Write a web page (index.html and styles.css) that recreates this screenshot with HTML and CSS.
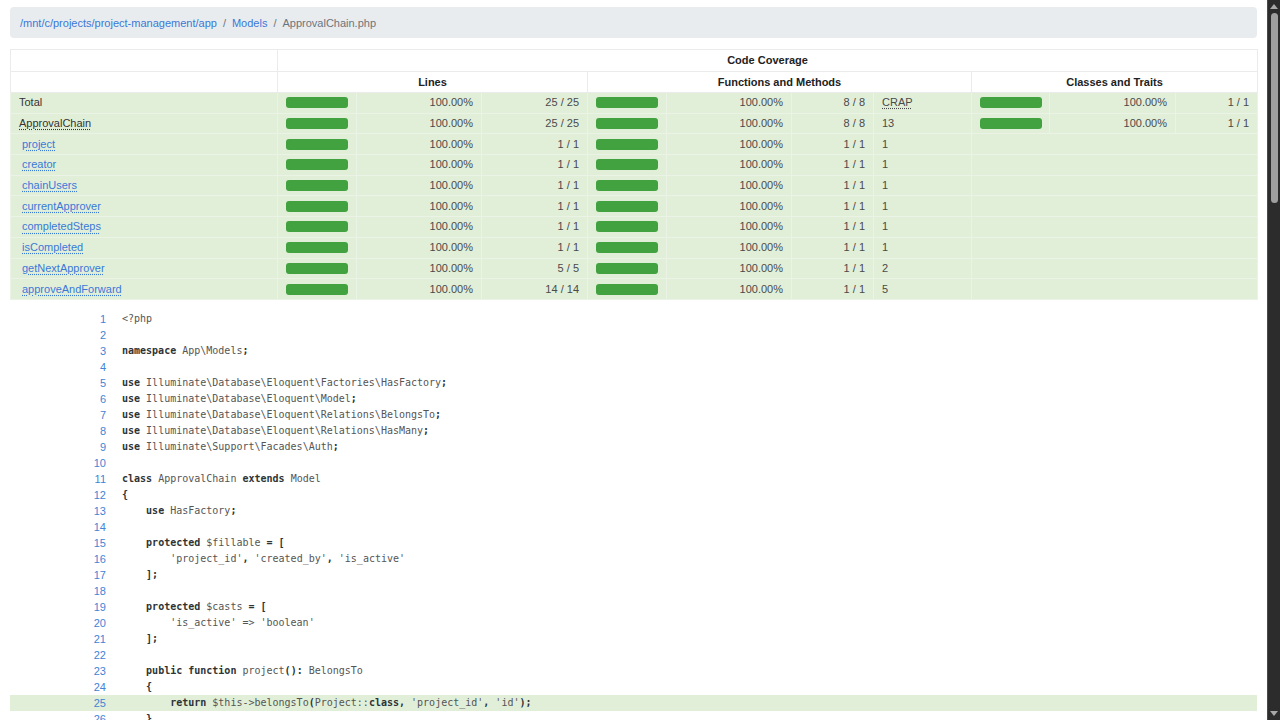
FILE: index.html
```html
<!DOCTYPE html>
<html lang="en">
<head>
<meta charset="utf-8">
<title>Code Coverage for ApprovalChain.php</title>
<link rel="stylesheet" href="styles.css">
</head>
<body>
<div class="page">
  <div class="main">
    <nav class="breadcrumb">
      <a href="#">/mnt/c/projects/project-management/app</a>
      <span class="sep">/</span>
      <a href="#">Models</a>
      <span class="sep">/</span>
      <span class="active">ApprovalChain.php</span>
    </nav>

    <table class="cov">
      <colgroup>
        <col class="c-name"><col class="c-bar"><col class="c-pct"><col class="c-cnt-l">
        <col class="c-bar"><col class="c-pct"><col class="c-cnt"><col class="c-crap">
        <col class="c-bar2"><col class="c-pct2"><col class="c-cnt">
      </colgroup>
      <thead>
        <tr class="h1"><td></td><td colspan="10" class="center"><strong>Code Coverage</strong></td></tr>
        <tr class="h2"><td></td><td colspan="3" class="center"><strong>Lines</strong></td><td colspan="4" class="center"><strong>Functions and Methods</strong></td><td colspan="3" class="center"><strong>Classes and Traits</strong></td></tr>
      </thead>
      <tbody>
        <tr><td class="name">Total</td><td class="bar"><div class="progress"></div></td><td class="num">100.00%</td><td class="num">25 / 25</td><td class="bar"><div class="progress"></div></td><td class="num">100.00%</td><td class="num">8 / 8</td><td class="crap"><abbr>CRAP</abbr></td><td class="bar"><div class="progress"></div></td><td class="num">100.00%</td><td class="num">1 / 1</td></tr>
        <tr><td class="name"><abbr>ApprovalChain</abbr></td><td class="bar"><div class="progress"></div></td><td class="num">100.00%</td><td class="num">25 / 25</td><td class="bar"><div class="progress"></div></td><td class="num">100.00%</td><td class="num">8 / 8</td><td class="crap">13</td><td class="bar"><div class="progress"></div></td><td class="num">100.00%</td><td class="num">1 / 1</td></tr>
        <tr><td class="name method"><a href="#23">project</a></td><td class="bar"><div class="progress"></div></td><td class="num">100.00%</td><td class="num">1 / 1</td><td class="bar"><div class="progress"></div></td><td class="num">100.00%</td><td class="num">1 / 1</td><td class="crap">1</td><td colspan="3"></td></tr>
        <tr><td class="name method"><a href="#28">creator</a></td><td class="bar"><div class="progress"></div></td><td class="num">100.00%</td><td class="num">1 / 1</td><td class="bar"><div class="progress"></div></td><td class="num">100.00%</td><td class="num">1 / 1</td><td class="crap">1</td><td colspan="3"></td></tr>
        <tr><td class="name method"><a href="#33">chainUsers</a></td><td class="bar"><div class="progress"></div></td><td class="num">100.00%</td><td class="num">1 / 1</td><td class="bar"><div class="progress"></div></td><td class="num">100.00%</td><td class="num">1 / 1</td><td class="crap">1</td><td colspan="3"></td></tr>
        <tr><td class="name method"><a href="#38">currentApprover</a></td><td class="bar"><div class="progress"></div></td><td class="num">100.00%</td><td class="num">1 / 1</td><td class="bar"><div class="progress"></div></td><td class="num">100.00%</td><td class="num">1 / 1</td><td class="crap">1</td><td colspan="3"></td></tr>
        <tr><td class="name method"><a href="#43">completedSteps</a></td><td class="bar"><div class="progress"></div></td><td class="num">100.00%</td><td class="num">1 / 1</td><td class="bar"><div class="progress"></div></td><td class="num">100.00%</td><td class="num">1 / 1</td><td class="crap">1</td><td colspan="3"></td></tr>
        <tr><td class="name method"><a href="#48">isCompleted</a></td><td class="bar"><div class="progress"></div></td><td class="num">100.00%</td><td class="num">1 / 1</td><td class="bar"><div class="progress"></div></td><td class="num">100.00%</td><td class="num">1 / 1</td><td class="crap">1</td><td colspan="3"></td></tr>
        <tr><td class="name method"><a href="#53">getNextApprover</a></td><td class="bar"><div class="progress"></div></td><td class="num">100.00%</td><td class="num">5 / 5</td><td class="bar"><div class="progress"></div></td><td class="num">100.00%</td><td class="num">1 / 1</td><td class="crap">2</td><td colspan="3"></td></tr>
        <tr><td class="name method"><a href="#65">approveAndForward</a></td><td class="bar"><div class="progress"></div></td><td class="num">100.00%</td><td class="num">14 / 14</td><td class="bar"><div class="progress"></div></td><td class="num">100.00%</td><td class="num">1 / 1</td><td class="crap">5</td><td colspan="3"></td></tr>
      </tbody>
    </table>

    <table class="code">
      <colgroup><col class="c-ln"><col></colgroup>
      <tbody>
        <tr><td class="ln"><a href="#1">1</a></td><td class="line"><span class="d">&lt;?php</span></td></tr>
        <tr><td class="ln"><a href="#2">2</a></td><td class="line"></td></tr>
        <tr><td class="ln"><a href="#3">3</a></td><td class="line"><span class="k">namespace</span> <span class="d">App\Models</span><span class="k">;</span></td></tr>
        <tr><td class="ln"><a href="#4">4</a></td><td class="line"></td></tr>
        <tr><td class="ln"><a href="#5">5</a></td><td class="line"><span class="k">use</span> <span class="d">Illuminate\Database\Eloquent\Factories\HasFactory</span><span class="k">;</span></td></tr>
        <tr><td class="ln"><a href="#6">6</a></td><td class="line"><span class="k">use</span> <span class="d">Illuminate\Database\Eloquent\Model</span><span class="k">;</span></td></tr>
        <tr><td class="ln"><a href="#7">7</a></td><td class="line"><span class="k">use</span> <span class="d">Illuminate\Database\Eloquent\Relations\BelongsTo</span><span class="k">;</span></td></tr>
        <tr><td class="ln"><a href="#8">8</a></td><td class="line"><span class="k">use</span> <span class="d">Illuminate\Database\Eloquent\Relations\HasMany</span><span class="k">;</span></td></tr>
        <tr><td class="ln"><a href="#9">9</a></td><td class="line"><span class="k">use</span> <span class="d">Illuminate\Support\Facades\Auth</span><span class="k">;</span></td></tr>
        <tr><td class="ln"><a href="#10">10</a></td><td class="line"></td></tr>
        <tr><td class="ln"><a href="#11">11</a></td><td class="line"><span class="k">class</span> <span class="d">ApprovalChain</span> <span class="k">extends</span> <span class="d">Model</span></td></tr>
        <tr><td class="ln"><a href="#12">12</a></td><td class="line"><span class="k">{</span></td></tr>
        <tr><td class="ln"><a href="#13">13</a></td><td class="line">    <span class="k">use</span> <span class="d">HasFactory</span><span class="k">;</span></td></tr>
        <tr><td class="ln"><a href="#14">14</a></td><td class="line"></td></tr>
        <tr><td class="ln"><a href="#15">15</a></td><td class="line">    <span class="k">protected</span> <span class="d">$fillable</span> <span class="k">=</span> <span class="k">[</span></td></tr>
        <tr><td class="ln"><a href="#16">16</a></td><td class="line">        <span class="d">'project_id'</span><span class="k">,</span> <span class="d">'created_by'</span><span class="k">,</span> <span class="d">'is_active'</span></td></tr>
        <tr><td class="ln"><a href="#17">17</a></td><td class="line">    <span class="k">];</span></td></tr>
        <tr><td class="ln"><a href="#18">18</a></td><td class="line"></td></tr>
        <tr><td class="ln"><a href="#19">19</a></td><td class="line">    <span class="k">protected</span> <span class="d">$casts</span> <span class="k">=</span> <span class="k">[</span></td></tr>
        <tr><td class="ln"><a href="#20">20</a></td><td class="line">        <span class="d">'is_active' =&gt; 'boolean'</span></td></tr>
        <tr><td class="ln"><a href="#21">21</a></td><td class="line">    <span class="k">];</span></td></tr>
        <tr><td class="ln"><a href="#22">22</a></td><td class="line"></td></tr>
        <tr><td class="ln"><a href="#23">23</a></td><td class="line">    <span class="k">public</span> <span class="k">function</span> <span class="d">project</span><span class="k">():</span> <span class="d">BelongsTo</span></td></tr>
        <tr><td class="ln"><a href="#24">24</a></td><td class="line">    <span class="k">{</span></td></tr>
        <tr class="covered"><td class="ln"><a href="#25">25</a></td><td class="line">        <span class="k">return</span> <span class="d">$this-&gt;belongsTo</span><span class="k">(</span><span class="d">Project::</span><span class="k">class</span><span class="k">,</span> <span class="d">'project_id'</span><span class="k">,</span> <span class="d">'id'</span><span class="k">);</span></td></tr>
        <tr><td class="ln"><a href="#26">26</a></td><td class="line">    <span class="k">}</span></td></tr>
        <tr><td class="ln"><a href="#27">27</a></td><td class="line"></td></tr>
      </tbody>
    </table>
  </div>
  <div class="scrollbar">
    <div class="arrow up"></div>
    <div class="track"><div class="thumb"></div></div>
    <div class="arrow down"></div>
  </div>
</div>
</body>
</html>
```
FILE: styles.css
```css
* { box-sizing: border-box; }
html, body { margin: 0; padding: 0; }
body {
  font-family: "Liberation Sans", Arial, sans-serif;
  font-size: 11px;
  color: #212529;
  background: #fff;
}
.page {
  display: flex;
  width: 1280px;
  height: 720px;
  overflow: hidden;
}
.main {
  flex: 1;
  min-width: 0;
  padding: 7px 10px 0 10px;
}
a { color: #3a78d8; text-decoration: none; }

/* breadcrumb */
.breadcrumb {
  display: flex;
  align-items: center;
  height: 31px;
  padding: 0 10px;
  background: #e9ecef;
  border-radius: 4px;
  font-size: 11px;
}
.breadcrumb .sep { color: #6c757d; padding: 0 6px; }
.breadcrumb .active { color: #6c757d; }

/* coverage table */
.cov {
  width: 1247px;
  margin-top: 11px;
  border-collapse: collapse;
  table-layout: fixed;
}
.c-name { width: 267px; }
.c-bar { width: 79px; }
.c-pct { width: 125px; }
.c-cnt-l { width: 106px; }
.c-cnt { width: 82px; }
.c-crap { width: 98px; }
.c-bar2 { width: 78px; }
.c-pct2 { width: 126px; }
.cov td {
  padding: 0 8px;
  line-height: 13px;
  vertical-align: middle;
  white-space: nowrap;
}
.cov thead td { border: 1px solid #ebebeb; background: #fff; }
.cov thead tr.h1 { height: 22px; }
.cov thead tr.h2 { height: 21px; }
.cov .center { text-align: center; }
.cov strong { font-weight: bold; color: #222; }
.cov tbody tr { height: 20.7px; }
.cov tbody td {
  background: #e1efd9;
  border: 1px solid #eaf3e5;
  color: #4a4a4a;
}
.cov td.name { color: #333; }
.cov td.method { padding-left: 11px; }
.cov td.method a {
  color: #3a78d8;
  text-decoration: underline dotted;
  text-underline-offset: 2px;
}
.cov abbr {
  text-decoration: underline dotted;
  text-underline-offset: 2px;
}
.cov td.num { text-align: right; }
.cov td.crap { text-align: left; }
.cov td.bar { padding-left: 8px; padding-right: 0; }
.progress {
  width: 62px;
  height: 11px;
  border-radius: 3px;
  background: #41a23f;
}

/* code */
.code {
  width: 1247px;
  margin-top: 11px;
  border-collapse: collapse;
  table-layout: fixed;
}
.c-ln { width: 104px; }
.code tr { height: 16px; }
.code td { padding: 0; vertical-align: middle; }
.code td.ln {
  text-align: right;
  padding-right: 8px;
  font-size: 11px;
  line-height: 16px;
}
.code td.ln a { color: #3f84d6; }
.code td.line {
  padding-left: 8px;
  font-family: "DejaVu Sans Mono", "Liberation Mono", monospace;
  font-size: 10px;
  line-height: 16px;
  white-space: pre;
  color: #555;
}
.code .k { font-weight: bold; color: #2e3436; }
.code .d { color: #555; }
.code tr.covered td { background: #e1efd9; }

/* scrollbar */
.scrollbar {
  width: 13px;
  height: 720px;
  background: #2c2c2c;
  border-left: 1px solid #4a4a4a;
  display: flex;
  flex-direction: column;
  align-items: center;
}
.arrow { width: 0; height: 0; border-left: 4px solid transparent; border-right: 4px solid transparent; }
.arrow.up { margin-top: 4px; border-bottom: 5px solid #a8a8a8; }
.arrow.down { margin-bottom: 4px; border-top: 5px solid #a8a8a8; }
.track { flex: 1; width: 100%; display: flex; justify-content: center; }
.thumb {
  width: 7px;
  height: 190px;
  margin-top: 4px;
  border-radius: 4px;
  background: #9f9f9f;
}
```
